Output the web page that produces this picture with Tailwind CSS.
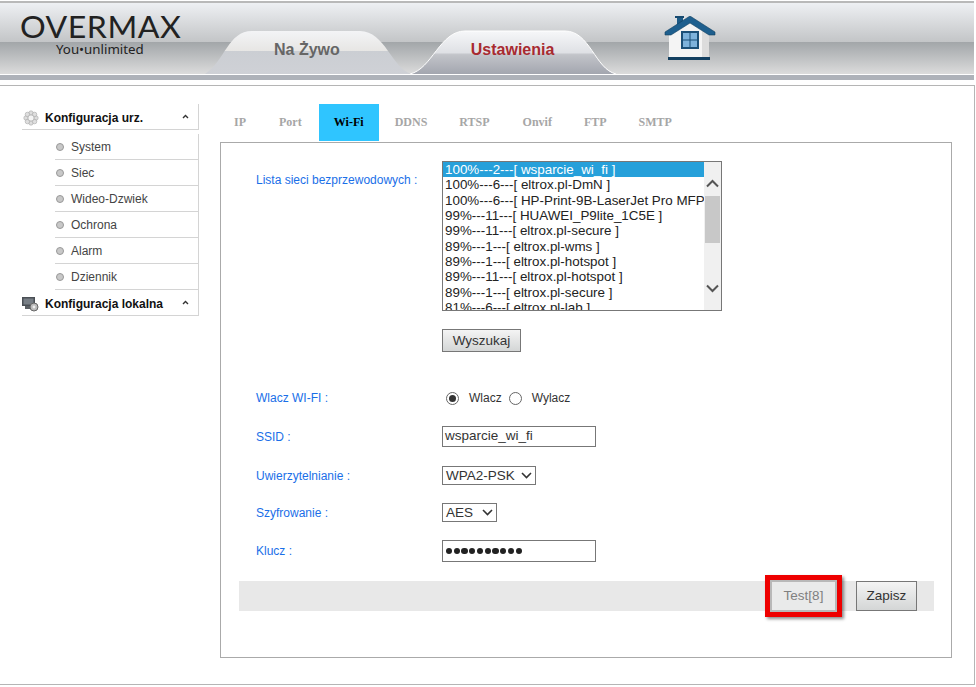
<!DOCTYPE html>
<html lang="pl"><head><meta charset="utf-8"><title>Overmax</title>
<script src="https://cdn.jsdelivr.net/npm/@tailwindcss/browser@4"></script></head>
<body class="bg-white">
<div class="w-[976px] h-[687px] overflow-hidden bg-white font-['Liberation_Sans',sans-serif] text-[12px] text-[#333]">
  <!-- header -->
  <header class="relative mt-[1px] w-[974px] h-[79px] border-t-2 border-[#b9b9b9] overflow-hidden">
    <div class="h-[39px] bg-gradient-to-b from-[#eef0f3] to-[#c3c5c7]"></div>
    <div class="h-[32px] bg-gradient-to-b from-[#a2a6a9] to-[#dcdcdc]"></div>
    <div class="h-[1px] bg-white"></div>
    <div class="h-[6px] bg-[#aeb2b9]"></div>
    <svg class="absolute left-0 top-0" width="974" height="77" viewBox="0 2 974 77">
      <defs>
        <linearGradient id="g1" x1="0" y1="0" x2="0" y2="1"><stop offset="0" stop-color="#f3f4f6"/><stop offset="0.46" stop-color="#e7e6e4"/><stop offset="0.47" stop-color="#cbced3"/><stop offset="1" stop-color="#cfd1d6"/></linearGradient>
        <linearGradient id="g2" x1="0" y1="0" x2="0" y2="1"><stop offset="0" stop-color="#f6f7f9"/><stop offset="0.5" stop-color="#dfe1e5"/><stop offset="0.55" stop-color="#c2c4c9"/><stop offset="1" stop-color="#a3a6af"/></linearGradient>
      </defs>
      <path d="M205 73 C225 60 228 30 252 30 L360 30 C385 30 392 68 412 73 Z" fill="url(#g1)"/>
      <path d="M410 73 C432 68 440 30 465 30 L565 30 C590 30 595 68 616 73 Z" fill="url(#g2)"/>
      <path d="M410 73 C432 68 440 30 465 30 L565 30 C590 30 595 68 616 73" fill="none" stroke="#fff"/>
    </svg>
    <div class="absolute left-0 top-0 flex h-full">
      <div class="ml-[20px] w-[166px] pt-[11px]">
        <div class="font-['Lato',sans-serif] font-normal text-[31px] leading-[24px] text-[#222] tracking-[0.5px] origin-left scale-x-[1.035] whitespace-nowrap">OVERMAX</div>
        <div class="ml-[36px] mt-[3px] font-['Noto_Sans',sans-serif] text-[13.3px] leading-[16px] text-[#222] whitespace-nowrap">You•unlimited</div>
      </div>
      <div class="ml-[88px] mt-[37px] text-[16px] leading-[20px] font-bold text-[#666] whitespace-nowrap">Na Żywo</div>
      <div class="ml-[131px] mt-[37px] text-[16px] leading-[20px] font-bold text-[#a82a30] whitespace-nowrap">Ustawienia</div>
      <svg class="ml-[110px] mt-[13px]" width="52" height="46" viewBox="0 0 52 46">
        <rect x="13" y="1" width="6" height="10" fill="#1c5a86"/><rect x="11" y="0" width="9" height="2" fill="#174a70"/>
        <path d="M5 18 L26 4 L45 18 L45 41 L5 41 Z" fill="#f4f4f4"/><path d="M38 14 L45 18 L45 41 L38 41 Z" fill="#dcdcdc"/>
        <path d="M1 16 L26 0 L51 16 L51 19 L45 19 L26 7 L7 19 L1 19 Z" fill="#1e5f8e" stroke="#123f60" stroke-width="0.6"/>
        <rect x="17" y="15" width="18" height="18" fill="#1b4f78"/><rect x="19" y="17" width="14" height="14" fill="#7db2dc"/><rect x="25.5" y="17" width="1" height="14" fill="#1b4f78"/><rect x="19" y="23.5" width="14" height="1" fill="#1b4f78"/>
        <rect x="4" y="41" width="42" height="3" fill="#123f60"/>
      </svg>
    </div>
  </header>
  <!-- main -->
  <main class="mt-[5px] w-[975px] h-[600px] border-t-1 border-r-1 border-b-1 border-[#b5b5b5] flex">
    <!-- sidebar -->
    <aside class="ml-[22px] mt-[18px] w-[177px] shrink-0">
      <div class="h-[26px] pt-[2px] border-r border-b border-[#d4d4d4] flex items-center">
        <svg width="16" height="16" viewBox="0 0 16 16" class="ml-[1px]"><g fill="#dedede" stroke="#a8a8a8" stroke-width="0.6"><circle cx="8" cy="3" r="2.2"/><circle cx="8" cy="13" r="2.2"/><circle cx="3" cy="8" r="2.2"/><circle cx="13" cy="8" r="2.2"/><circle cx="4.4" cy="4.4" r="2.2"/><circle cx="11.6" cy="4.4" r="2.2"/><circle cx="4.4" cy="11.6" r="2.2"/><circle cx="11.6" cy="11.6" r="2.2"/><circle cx="8" cy="8" r="3" fill="#f4f4f4"/></g></svg>
        <span class="ml-[6px] font-bold text-[12px] text-[#111]">Konfiguracja urz.</span>
        <svg class="ml-auto mr-[9px] mb-[3px]" width="7" height="5" viewBox="0 0 7 5"><path d="M1 4 L3.5 1.5 L6 4" fill="none" stroke="#333" stroke-width="1.4"/></svg>
      </div>
      <div class="mt-[4px] border-r border-[#d4d4d4]">
        <div class="ml-[33px] h-[26px] border-b border-[#d4d4d4] flex items-center"><span class="ml-[1px] size-[8px] rounded-full bg-[#c8c8c8] border border-[#999]"></span><span class="ml-[7px] text-[#444]">System</span></div>
        <div class="ml-[33px] h-[26px] border-b border-[#d4d4d4] flex items-center"><span class="ml-[1px] size-[8px] rounded-full bg-[#c8c8c8] border border-[#999]"></span><span class="ml-[7px] text-[#444]">Siec</span></div>
        <div class="ml-[33px] h-[26px] border-b border-[#d4d4d4] flex items-center"><span class="ml-[1px] size-[8px] rounded-full bg-[#c8c8c8] border border-[#999]"></span><span class="ml-[7px] text-[#444]">Wideo-Dzwiek</span></div>
        <div class="ml-[33px] h-[26px] border-b border-[#d4d4d4] flex items-center"><span class="ml-[1px] size-[8px] rounded-full bg-[#c8c8c8] border border-[#999]"></span><span class="ml-[7px] text-[#444]">Ochrona</span></div>
        <div class="ml-[33px] h-[26px] border-b border-[#d4d4d4] flex items-center"><span class="ml-[1px] size-[8px] rounded-full bg-[#c8c8c8] border border-[#999]"></span><span class="ml-[7px] text-[#444]">Alarm</span></div>
        <div class="ml-[33px] h-[26px] border-b border-[#d4d4d4] flex items-center"><span class="ml-[1px] size-[8px] rounded-full bg-[#c8c8c8] border border-[#999]"></span><span class="ml-[7px] text-[#444]">Dziennik</span></div>
      </div>
      <div class="h-[26px] pt-[2px] border-r border-b border-[#d4d4d4] flex items-center">
        <svg width="17" height="16" viewBox="0 0 17 16"><rect x="0" y="1" width="13" height="9" fill="#4a4f55"/><rect x="1.5" y="2.5" width="10" height="6" fill="#777e85"/><rect x="3" y="10" width="7" height="3" fill="#5a5f64"/><circle cx="12" cy="11" r="4" fill="#bbb" stroke="#666"/><circle cx="12" cy="11" r="1.4" fill="#eee"/></svg>
        <span class="ml-[6px] font-bold text-[12px] text-[#111]">Konfiguracja lokalna</span>
        <svg class="ml-auto mr-[9px] mb-[3px]" width="7" height="5" viewBox="0 0 7 5"><path d="M1 4 L3.5 1.5 L6 4" fill="none" stroke="#333" stroke-width="1.4"/></svg>
      </div>
    </aside>
    <!-- content -->
    <section class="ml-[21px] w-[732px] shrink-0">
      <nav class="mt-[18px] h-[38px] flex font-['Liberation_Serif',serif] font-bold text-[12px] text-[#a6a6a6]">
        <span class="pl-[14px] pr-[17px] leading-[36px]">IP</span>
        <span class="pl-[16px] pr-[17px] leading-[36px]">Port</span>
        <span class="w-[60px] h-[37px] bg-[#2fc5ff] text-center text-black leading-[36px]">Wi-Fi</span>
        <span class="px-[16px] leading-[36px]">DDNS</span>
        <span class="pl-[16px] pr-[17px] leading-[36px]">RTSP</span>
        <span class="px-[16px] leading-[36px]">Onvif</span>
        <span class="px-[16px] leading-[36px]">FTP</span>
        <span class="px-[16px] leading-[36px]">SMTP</span>
      </nav>
      <div class="w-[732px] h-[516px] border border-[#aaa]">
        <div class="flex pt-[18px]">
          <label class="ml-[35px] w-[186px] mt-[12px] leading-[14px] text-[#1a6fe8]">Lista sieci bezprzewodowych :</label>
          <div>
            <div class="relative w-[280px] h-[150px] border border-[#777] overflow-hidden text-[13.4px] text-[#222] leading-[15.33px] whitespace-nowrap">
              <div class="h-[15.33px] w-[261px] pl-[2px] bg-[#26a0da] text-white">100%---2---[ wsparcie_wi_fi ]</div>
              <div class="pl-[2px]">100%---6---[ eltrox.pl-DmN ]</div>
              <div class="pl-[2px] w-[261px] overflow-hidden">100%---6---[ HP-Print-9B-LaserJet Pro MFP</div>
              <div class="pl-[2px]">99%---11---[ HUAWEI_P9lite_1C5E ]</div>
              <div class="pl-[2px]">99%---11---[ eltrox.pl-secure ]</div>
              <div class="pl-[2px]">89%---1---[ eltrox.pl-wms ]</div>
              <div class="pl-[2px]">89%---1---[ eltrox.pl-hotspot ]</div>
              <div class="pl-[2px]">89%---11---[ eltrox.pl-hotspot ]</div>
              <div class="pl-[2px]">89%---1---[ eltrox.pl-secure ]</div>
              <div class="h-[11px] overflow-hidden pl-[2px]">81%---6---[ eltrox.pl-lab ]</div>
              <div class="absolute right-0 top-0 bottom-0 w-[17px] bg-[#f0f0f0] flex flex-col items-center">
                <svg class="mt-[17px]" width="13" height="9" viewBox="0 0 13 9"><path d="M1 7.5 L6.5 2 L12 7.5" fill="none" stroke="#555" stroke-width="2"/></svg>
                <div class="mt-[8px] w-[15px] h-[47px] bg-[#c8c8c8]"></div>
                <svg class="mt-[41px]" width="13" height="9" viewBox="0 0 13 9"><path d="M1 1.5 L6.5 7 L12 1.5" fill="none" stroke="#555" stroke-width="2"/></svg>
              </div>
            </div>
            <button class="mt-[18px] w-[79px] h-[23px] border border-[#777] bg-gradient-to-b from-[#f4f4f4] to-[#d4d6d6] text-[13.5px] leading-[18px] text-[#333]">Wyszukaj</button>
          </div>
        </div>
        <div class="mt-[36px] h-[20px] flex items-center">
          <span class="ml-[35px] w-[186px] text-[#1a6fe8]">Wlacz WI-FI :</span>
          <span class="ml-[4px] size-[13px] rounded-full border border-[#666] flex items-center justify-center"><span class="size-[7px] rounded-full bg-[#333]"></span></span>
          <span class="ml-[10px] text-[#333]">Wlacz</span>
          <span class="ml-[7px] size-[13px] rounded-full border border-[#666]"></span>
          <span class="ml-[10px] text-[#333]">Wylacz</span>
        </div>
        <div class="mt-[18px] h-[21px] flex items-center">
          <span class="ml-[35px] w-[186px] text-[#1a6fe8]">SSID :</span>
          <div class="w-[154px] h-[21px] border border-[#777] pl-[2px] text-[13.5px] leading-[18px] text-[#333]">wsparcie_wi_fi</div>
        </div>
        <div class="mt-[19px] h-[19px] flex items-center">
          <span class="ml-[35px] w-[186px] text-[#1a6fe8]">Uwierzytelnianie :</span>
          <div class="w-[94px] h-[19px] border border-[#777] pl-[3px] text-[13.5px] leading-[17px] text-[#333] flex items-center justify-between">WPA2-PSK<svg class="mr-[3px]" width="11" height="7" viewBox="0 0 11 7"><path d="M1 1 L5.5 5.5 L10 1" fill="none" stroke="#333" stroke-width="1.6"/></svg></div>
        </div>
        <div class="mt-[18px] h-[19px] flex items-center">
          <span class="ml-[35px] w-[186px] text-[#1a6fe8]">Szyfrowanie :</span>
          <div class="w-[55px] h-[19px] border border-[#777] pl-[3px] text-[13.5px] leading-[17px] text-[#333] flex items-center justify-between">AES<svg class="mr-[3px]" width="11" height="7" viewBox="0 0 11 7"><path d="M1 1 L5.5 5.5 L10 1" fill="none" stroke="#333" stroke-width="1.6"/></svg></div>
        </div>
        <div class="mt-[18px] h-[22px] flex items-center">
          <span class="ml-[35px] w-[186px] text-[#1a6fe8]">Klucz :</span>
          <div class="w-[154px] h-[22px] border border-[#777] pl-[3px] flex items-center gap-[1.55px]">
            <span class="size-[6.2px] rounded-full bg-[#222]"></span><span class="size-[6.2px] rounded-full bg-[#222]"></span><span class="size-[6.2px] rounded-full bg-[#222]"></span><span class="size-[6.2px] rounded-full bg-[#222]"></span><span class="size-[6.2px] rounded-full bg-[#222]"></span><span class="size-[6.2px] rounded-full bg-[#222]"></span><span class="size-[6.2px] rounded-full bg-[#222]"></span><span class="size-[6.2px] rounded-full bg-[#222]"></span><span class="size-[6.2px] rounded-full bg-[#222]"></span><span class="size-[6.2px] rounded-full bg-[#222]"></span>
          </div>
        </div>
        <div class="relative mt-[19px] ml-[18px] w-[695px] h-[30px] bg-[#e8e8e8]">
          <button class="absolute left-[531px] top-[-1px] w-[67px] h-[32px] border-2 border-[#b8b8b8] bg-[#e9eaea] text-[13.5px] text-[#808080] leading-[28px]">Test[8]</button>
          <div class="absolute left-[526px] top-[-6px] w-[77px] h-[42px] border-[5px] border-[#ee0000] shadow-[2px_2px_3px_rgba(0,0,0,0.45)]"></div>
          <button class="absolute left-[617px] top-0 w-[61px] h-[30px] border border-[#777] bg-gradient-to-b from-[#f4f4f4] to-[#d4d6d6] text-[13.5px] text-[#333] leading-[28px]">Zapisz</button>
        </div>
      </div>
    </section>
  </main>
</div>
</body></html>
